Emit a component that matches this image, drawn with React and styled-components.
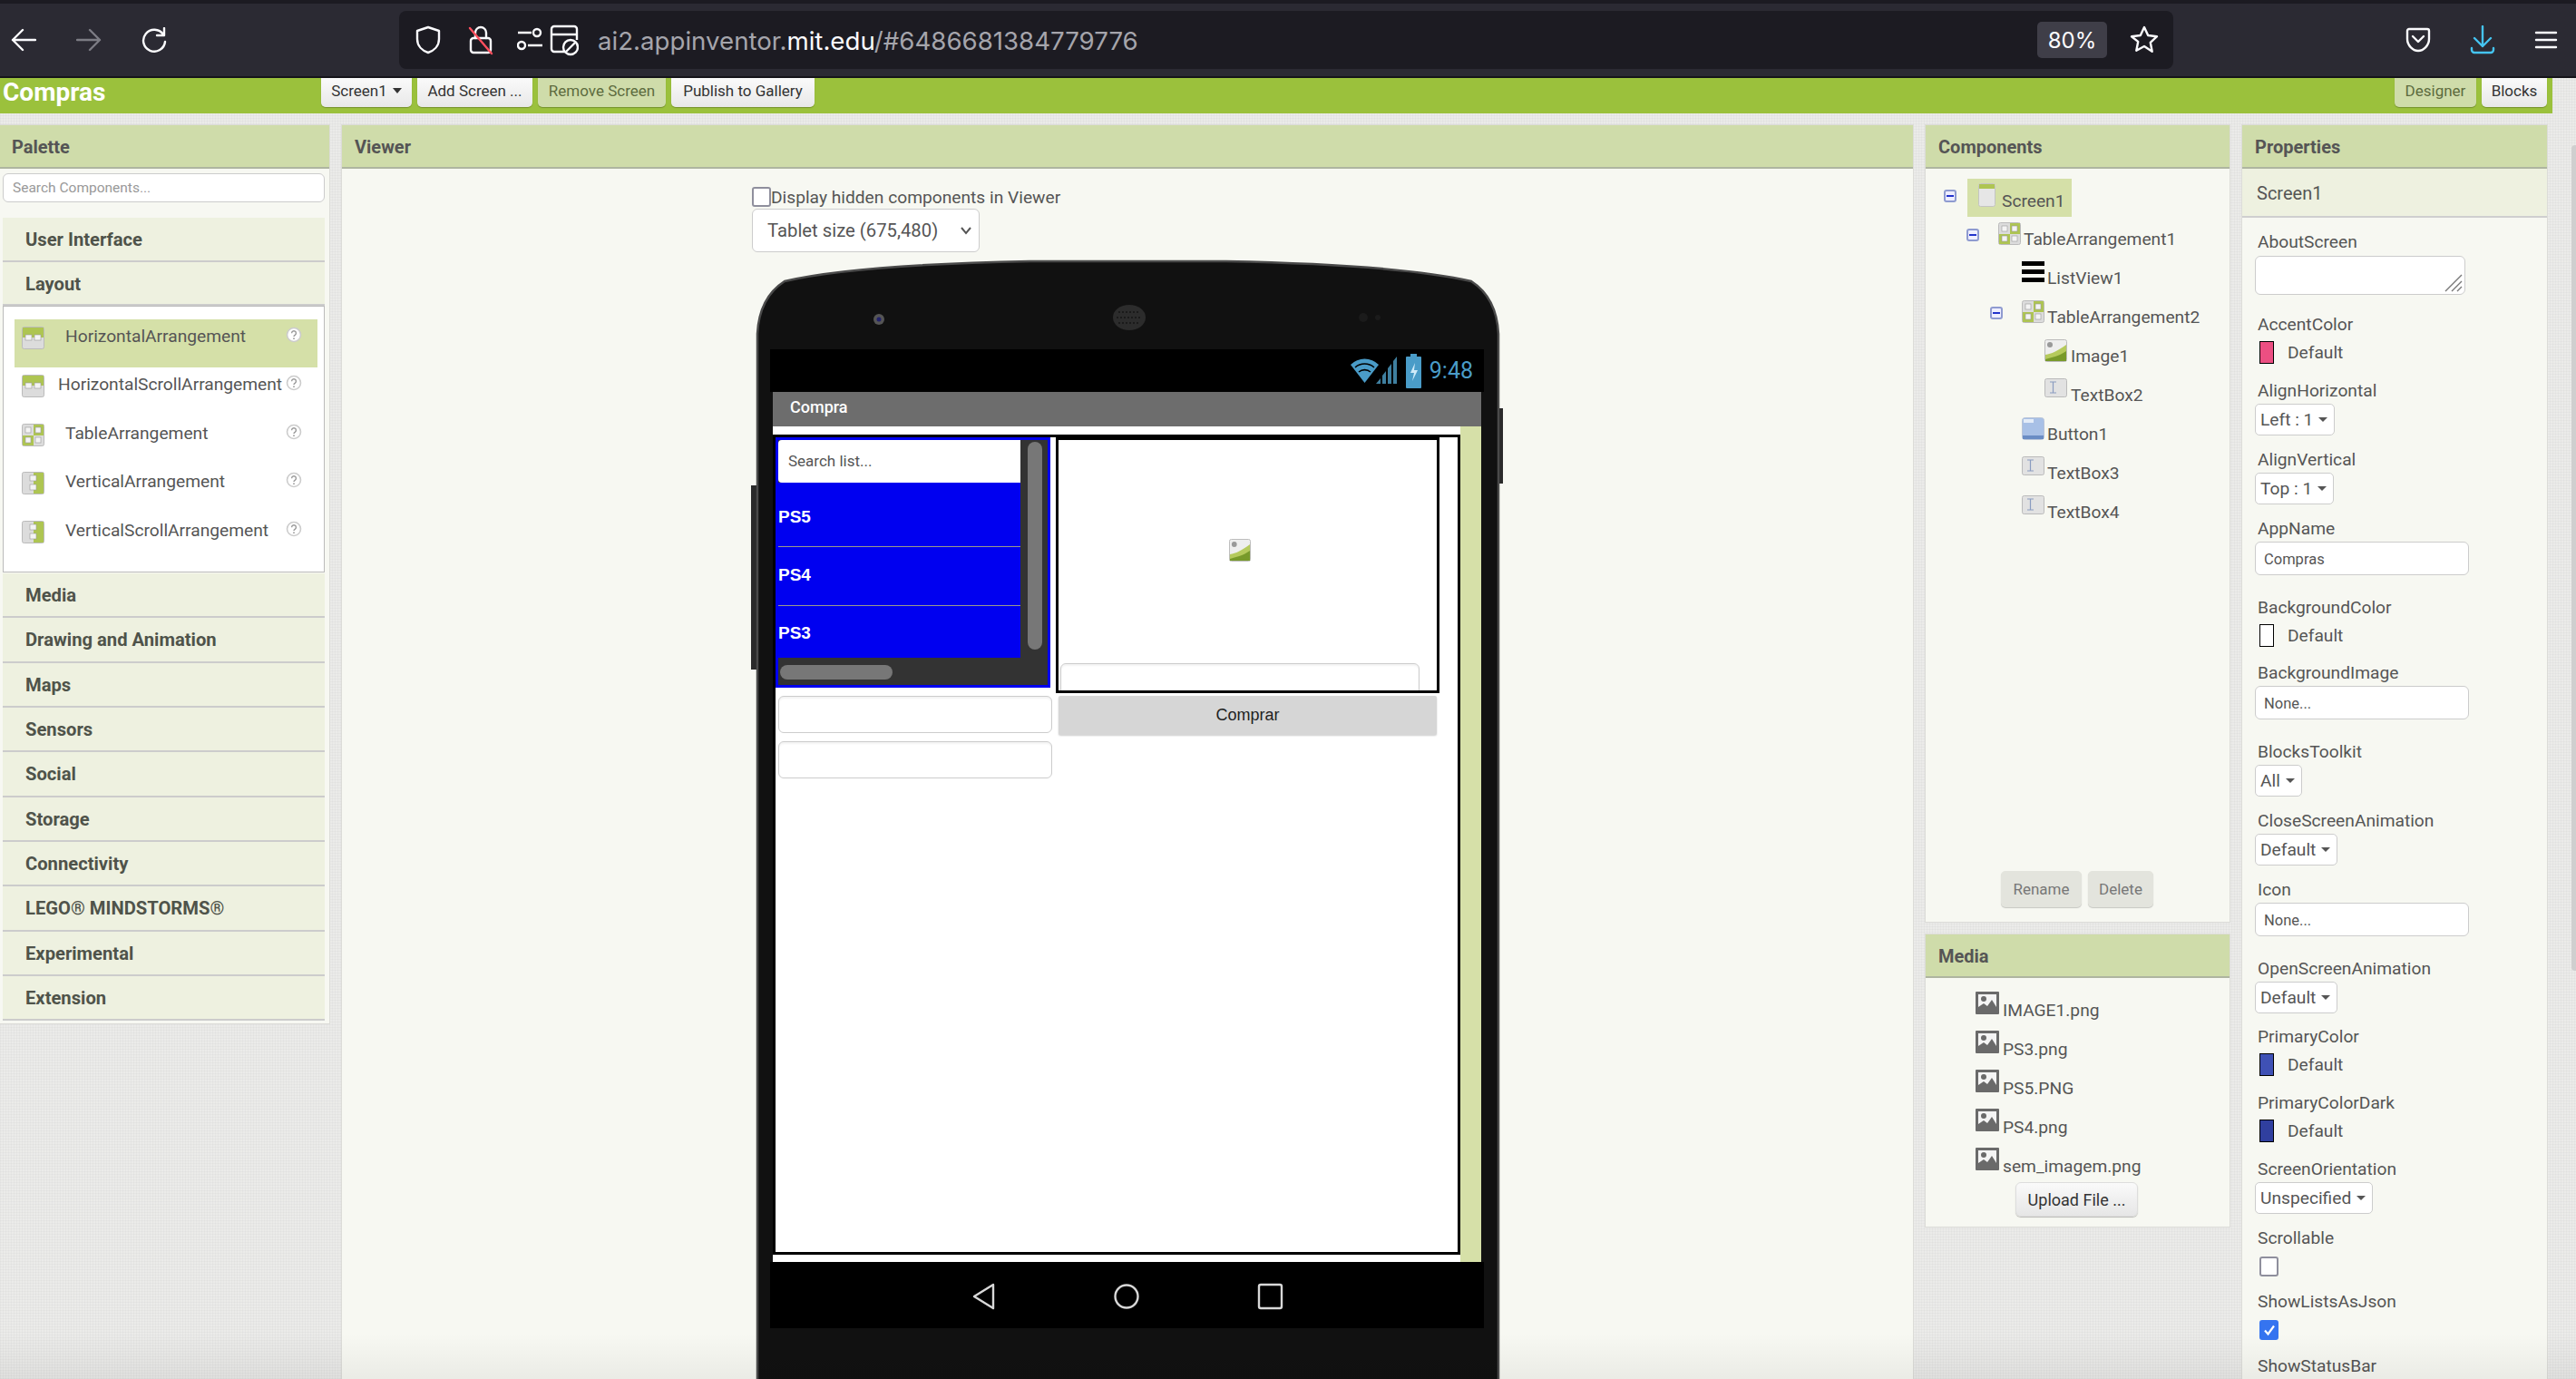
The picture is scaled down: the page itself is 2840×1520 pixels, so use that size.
import styled, { createGlobalStyle, css } from "styled-components";

const GlobalStyle = createGlobalStyle`
  html, body { margin: 0; padding: 0; }
  body {
    width: 2840px;
    height: 1520px;
    overflow: hidden;
    font-family: Roboto, "Liberation Sans", sans-serif;
    color: #555;
  }
  * { box-sizing: border-box; }
`;

const Page = styled.div`
  position: relative;
  width: 2840px;
  height: 1520px;
  overflow: hidden;
  background-color: #ebebe9;
  background-image:
    repeating-linear-gradient(0deg, rgba(0,0,0,.025) 0 1px, transparent 1px 3px),
    repeating-linear-gradient(90deg, rgba(0,0,0,.025) 0 1px, transparent 1px 3px);
`;

const BrowserBar = styled.div`
  height: 86px;
  background: #2b2a33;
  border-top: 4px solid #1c1b22;
  border-bottom: 2px solid #15141a;
  display: flex;
  align-items: center;
  position: relative;
`;

const NavButtons = styled.div`
  width: 440px;
  display: flex;
  align-items: center;
  padding-left: 12px;
  gap: 44px;
`;

const UrlBar = styled.div`
  width: 1956px;
  height: 64px;
  background: #1c1b22;
  border-radius: 8px;
  display: flex;
  align-items: center;
  padding-left: 18px;
`;

const UrlIcons = styled.div`
  display: flex;
  align-items: center;
  gap: 30px;
  margin-right: 21px;
`;

const UrlText = styled.div`
  flex: 1;
  padding-top: 2px;
  font: 400 27.65px Inter, "Liberation Sans", sans-serif;
  color: #a5a5ac;
  white-space: nowrap;
  b { font-weight: 400; color: #fbfbfe; }
`;

const ZoomBadge = styled.div`
  width: 77px;
  height: 40px;
  background: #3f3e48;
  border-radius: 5px;
  color: #fbfbfe;
  font: 400 24px Inter, "Liberation Sans", sans-serif;
  display: flex;
  align-items: center;
  justify-content: center;
  margin-right: 25px;
`;

const BrowserRight = styled.div`
  flex: 1;
  display: flex;
  align-items: center;
  padding-left: 256px;
  gap: 43px;
`;

const ProjectBar = styled.div`
  width: 2814px;
  height: 39px;
  background: #9bc13c;
  display: flex;
  align-items: flex-start;
`;

const ProjectName = styled.div`
  width: 354px;
  padding-left: 3px;
  font-size: 28px;
  font-weight: 700;
  line-height: 32px;
  color: #fff;
`;

const ToolButtons = styled.div`
  display: flex;
  gap: 6px;
`;

const ToolButton = styled.div`
  height: 32px;
  width: ${(p) => p.$w}px;
  padding-bottom: 5px;
  display: flex;
  align-items: center;
  justify-content: center;
  gap: 6px;
  font-size: 17px;
  white-space: nowrap;
  color: ${(p) => (p.$active ? "#5d6b3e" : "#333")};
  background: ${(p) => (p.$active ? "#cfdcaa" : "linear-gradient(#fafafa, #e8e8e8)")};
  border-radius: 0 0 5px 5px;
  box-shadow: 0 1px 1px rgba(0,0,0,.25);
`;

const Spacer = styled.div`
  flex: 1;
`;

const RightButtons = styled(ToolButtons)`
  margin-right: 6px;
`;

const Workspace = styled.div`
  display: grid;
  grid-template-columns: 363px 1732px 335px 336px;
  gap: 14px;
  margin-top: 13px;
  height: 1382px;
  align-items: start;
`;

const Panel = styled.section`
  background: #f7f8f2;
  box-shadow: 0 0 0 1px #dcdcd8;
  ${(p) => p.$h && css`height: ${p.$h}px;`}
`;

const PanelHeader = styled.div`
  height: 48px;
  padding-left: ${(p) => p.$pad || 13}px;
  background: #cfdcaa;
  border-bottom: 2px solid #aeb5a0;
  font-size: 20px;
  font-weight: 700;
  line-height: 49px;
  color: #555;
`;

const SearchBox = styled.div`
  margin: 5px 5px 0 3px;
  height: 32px;
  background: #fff;
  border: 1px solid #ccc;
  border-radius: 6px;
  font-size: 15.5px;
  line-height: 30px;
  padding-left: 10px;
  color: #999;
`;

const Categories = styled.div`
  padding: 17px 5px 3px 3px;
`;

const Category = styled.div`
  height: ${(p) => p.$h || 49.33}px;
  background: #eef1e0;
  border-bottom: 2px solid #ccc;
  padding-left: 25px;
  font-size: 20.2px;
  font-weight: 700;
  line-height: 49px;
  color: #4f534a;
`;

const PaletteList = styled.div`
  height: 294px;
  background: #fff;
  border: 1px solid #bbb;
  padding: 14px 7px 0 12px;
  margin-bottom: 1px;
`;

const PaletteItem = styled.div`
  height: 53.4px;
  display: flex;
  align-items: flex-start;
  padding: 8px 0 0 8px;
  font-size: 19.2px;
  line-height: 22px;
  color: #555;
  background: ${(p) => (p.$selected ? "#d5e0a8" : "transparent")};
  span { margin-left: ${(p) => p.$gap}px; flex: 1; white-space: nowrap; }
`;

const ViewerBody = styled.div`
  height: 1334px;
  padding: 18px 0 0 452px;
  overflow: hidden;
`;

const HiddenRow = styled.div`
  display: flex;
  align-items: center;
  height: 26px;
  font-size: 19.2px;
  color: #555;
`;

const CheckBox = styled.div`
  width: ${(p) => p.$s || 21}px;
  height: ${(p) => p.$s || 22}px;
  border: 2px solid ${(p) => (p.$checked ? "#3574f0" : "#8f8f9d")};
  background: ${(p) => (p.$checked ? "#3574f0" : "#fff")};
  border-radius: 3px;
  display: flex;
  align-items: center;
  justify-content: center;
`;

const PhoneSizeSelect = styled.div`
  width: 251px;
  height: 48px;
  background: #fff;
  border: 1px solid #ccc;
  border-radius: 6px;
  display: flex;
  align-items: center;
  justify-content: space-between;
  padding: 0 7px 0 16px;
  font-size: 20.3px;
  color: #555;
`;

const Phone = styled.div`
  position: relative;
  width: 817px;
  height: 1240px;
  margin: 10px 0 0 6px;
  padding: 97px 16px 0 14px;
`;

const PhoneShell = styled.svg`
  position: absolute;
  left: 0;
  top: 0;
  overflow: visible;
`;

const StatusBar = styled.div`
  position: relative;
  height: 47px;
  background: #000;
  display: flex;
  align-items: center;
  justify-content: flex-end;
  padding-right: 12px;
  gap: 9px;
  color: #4a9cc8;
  font-size: 25px;
`;

const Screen = styled.div`
  position: relative;
  margin: 0 3px;
`;

const TitleBar = styled.div`
  height: 38px;
  background: #6d6d6d;
  color: #fff;
  font-size: 18px;
  font-weight: 500;
  line-height: 34px;
  padding-left: 19px;
`;

const ScreenRow = styled.div`
  display: flex;
  height: 921px;
`;

const FormArea = styled.div`
  width: 758px;
  padding-top: 9px;
  background: #fff;
`;

const GreenStrip = styled.div`
  flex: 1;
  background: #d6e0a8;
`;

const FormBox = styled.div`
  height: 904px;
  border: 3px solid #000;
  display: grid;
  grid-template-columns: 309px 423px;
  grid-template-rows: 282px auto 1fr;
  align-content: start;
`;

const ListBox = styled.div`
  position: relative;
  width: 303px;
  height: 276px;
  border: 3px solid #0000f0;
  background: #333;
`;

const ListSearch = styled.div`
  width: 267px;
  height: 47px;
  background: #fff;
  border-radius: 4px 0 0 4px;
  padding-left: 11px;
  font-size: 17px;
  line-height: 46px;
  color: #555;
`;

const ListRows = styled.div`
  width: 267px;
  height: 193px;
  background: #0000f0;
  overflow: hidden;
`;

const ListRow = styled.div`
  height: ${(p) => p.$h}px;
  padding-top: ${(p) => p.$top}px;
  border-bottom: 1px solid #9a9a8a;
  color: #fff;
  font: 700 19px "Liberation Sans", sans-serif;
  line-height: 24px;
`;

const ThumbV = styled.div`
  position: absolute;
  left: 275px;
  top: 2px;
  width: 16px;
  height: 229px;
  border-radius: 8px;
  background: #777;
`;

const ThumbH = styled.div`
  position: absolute;
  left: 2px;
  top: 248px;
  width: 124px;
  height: 16px;
  border-radius: 8px;
  background: #777;
`;

const ImageTable = styled.div`
  width: 423px;
  height: 282px;
  border: 3px solid #000;
  padding-left: 2px;
  overflow: hidden;
`;

const ImageCell = styled.div`
  width: 396px;
  height: 246px;
  display: flex;
  align-items: center;
  justify-content: center;
  padding-bottom: 4px;
`;

const FormTextBox = styled.div`
  width: ${(p) => p.$w}px;
  height: ${(p) => p.$h || 41}px;
  margin: ${(p) => p.$m || "0"};
  background: #fff;
  border: 1px solid #ccc;
  border-radius: 6px;
  box-shadow: inset 0 2px 2px rgba(0,0,0,.05);
`;

const FormButton = styled.div`
  width: 417px;
  height: 43px;
  margin: 3px 0 0 3px;
  background: #d6d6d6;
  box-shadow: 0 1px 2px rgba(0,0,0,.2);
  border-radius: 2px;
  display: flex;
  align-items: center;
  justify-content: center;
  font: 400 18px "Liberation Sans", sans-serif;
  color: #222;
`;

const NavBar = styled.div`
  position: relative;
  height: 73px;
  background: #000;
`;

const TreeBody = styled.div`
  padding: 11px 0 0 20px;
  height: 771px;
  position: relative;
`;

const TreeRow = styled.div`
  display: flex;
  align-items: flex-start;
  height: 43px;
  padding-left: ${(p) => p.$indent}px;
  font-size: 19.2px;
  color: #555;
`;

const Toggle = styled.span`
  width: 14px;
  height: 14px;
  margin: 12px 11px 0 0;
  flex: none;
  border: 2px solid #8f9bd0;
  border-radius: 3px;
  display: flex;
  align-items: center;
  justify-content: center;
  background: #eef;
  &::before {
    content: "";
    width: 8px;
    height: 2px;
    background: #2233cc;
  }
`;

const TreeLabel = styled.div`
  display: flex;
  align-items: flex-start;
  gap: ${(p) => p.$gap || 3}px;
  padding: ${(p) => (p.$selected ? "5px 7px 0 12px" : "5px 0 0 0")};
  height: ${(p) => (p.$selected ? "42px" : "auto")};
  background: ${(p) => (p.$selected ? "#d5e0a8" : "transparent")};
  margin-left: ${(p) => p.$lead || 0}px;
  span { margin-top: ${(p) => (p.$selected ? 8 : 7)}px; line-height: 24px; }
`;

const TreeActions = styled.div`
  position: absolute;
  left: 83px;
  top: 774px;
  display: flex;
  gap: 7px;
`;

const GreyButton = styled.div`
  width: ${(p) => p.$w}px;
  height: 40px;
  background: #e3e4dd;
  border-radius: 5px;
  box-shadow: 0 1px 1px rgba(0,0,0,.2);
  display: flex;
  align-items: center;
  justify-content: center;
  font-size: 17px;
  color: #777;
`;

const SideColumn = styled.div`
  display: flex;
  flex-direction: column;
  gap: 14px;
`;

const MediaBody = styled.div`
  padding: 15px 0 0 55px;
  height: 274px;
`;

const MediaRow = styled.div`
  display: flex;
  align-items: flex-start;
  gap: 4px;
  height: 43px;
  font-size: 19.2px;
  color: #555;
  span { margin-top: 9px; line-height: 24px; }
`;

const UploadButton = styled.div`
  width: 135px;
  height: 38px;
  margin: -5px 0 0 44px;
  background: linear-gradient(#fafafa, #e6e6e6);
  border-radius: 6px;
  border: 1px solid #ddd;
  box-shadow: 0 1px 1px rgba(0,0,0,.25);
  display: flex;
  align-items: center;
  justify-content: center;
  font-size: 18px;
  color: #333;
`;

const SelectedName = styled.div`
  height: 54px;
  background: #eef1e0;
  border-bottom: 2px solid #cfcfcf;
  padding-left: 16px;
  font-size: 20px;
  line-height: 54px;
  color: #555;
`;

const PropList = styled.div`
  height: 1286px;
  padding: 15px 0 0 14px;
  overflow: hidden;
`;

const PropRow = styled.div`
  height: ${(p) => p.$h}px;
  font-size: 19.2px;
  line-height: 24px;
  color: #555;
`;

const PropLabel = styled.div`
  padding-left: 3px;
  margin-bottom: ${(p) => p.$gap}px;
`;

const TextInput = styled.div`
  width: ${(p) => p.$w || 236}px;
  height: ${(p) => p.$h || 37}px;
  position: relative;
  background: #fff;
  border: 1px solid #ccc;
  border-radius: 6px;
  padding-left: 9px;
  font-size: 16.5px;
  line-height: 37px;
  color: #555;
`;

const GripIcon = styled.svg`
  position: absolute;
  right: 2px;
  bottom: 2px;
`;

const Dropdown = styled.div`
  display: inline-flex;
  align-items: center;
  gap: 6px;
  height: 35px;
  padding: 0 7px 0 5px;
  background: #fff;
  border: 1px solid #ccc;
  border-radius: 5px;
  font-size: 19.2px;
  color: #555;
  &::after {
    content: "";
    border-left: 5px solid transparent;
    border-right: 5px solid transparent;
    border-top: 5px solid #555;
  }
`;

const Caret = styled.span`
  width: 0;
  height: 0;
  border-left: 5px solid transparent;
  border-right: 5px solid transparent;
  border-top: 6px solid #333;
`;

const SwatchRow = styled.div`
  display: flex;
  align-items: center;
  padding-left: 5px;
  gap: 15px;
`;

const Swatch = styled.span`
  width: 16px;
  height: 25px;
  background: ${(p) => p.$color};
  border: 1px solid #000;
`;

const CheckWrap = styled.div`
  padding-left: 5px;
`;

const PageScrollbar = styled.div`
  position: absolute;
  left: 2835px;
  top: 160px;
  width: 5px;
  height: 910px;
  border-radius: 4px 0 0 4px;
  background: #cfcfcf;
`;

const BottomFade = styled.div`
  position: absolute;
  left: 0;
  right: 0;
  bottom: 0;
  height: 50px;
  background: linear-gradient(rgba(0,0,0,0), rgba(0,0,0,.05));
  pointer-events: none;
`;

function ArrangeIcon({ kind = "t", size = 25 }) {
  return (
    <svg width={size} height={size} viewBox="0 0 25 25" style={{ flex: "none" }}>
      <rect x="0.5" y="0.5" width="24" height="24" rx="2" fill="#dcdcdc" stroke="#bbb" />
      {kind === "h" && <rect x="1" y="1" width="23" height="11" fill="#aec552" />}
      {kind === "v" && <rect x="13" y="1" width="11" height="23" fill="#aec552" />}
      {kind === "t" && (
        <>
          <rect x="13" y="1" width="11" height="12" fill="#aec552" />
          <rect x="1" y="13" width="12" height="11" fill="#aec552" />
        </>
      )}
      {kind === "h" && (
        <>
          <rect x="4" y="9" width="7" height="6" fill="#f4f4f4" stroke="#999" strokeWidth=".6" />
          <rect x="14" y="9" width="7" height="6" fill="#f4f4f4" stroke="#999" strokeWidth=".6" />
        </>
      )}
      {kind === "v" && (
        <>
          <rect x="9" y="4" width="7" height="6" fill="#f4f4f4" stroke="#999" strokeWidth=".6" />
          <rect x="9" y="14" width="7" height="6" fill="#f4f4f4" stroke="#999" strokeWidth=".6" />
        </>
      )}
      {kind === "t" && (
        <>
          <rect x="4" y="4" width="6" height="6" fill="#f4f4f4" stroke="#999" strokeWidth=".6" />
          <rect x="15" y="4" width="6" height="6" fill="#f4f4f4" stroke="#999" strokeWidth=".6" />
          <rect x="4" y="15" width="6" height="6" fill="#f4f4f4" stroke="#999" strokeWidth=".6" />
          <rect x="15" y="15" width="6" height="6" fill="#f4f4f4" stroke="#999" strokeWidth=".6" />
        </>
      )}
    </svg>
  );
}

function HelpIcon() {
  return (
    <svg width="18" height="18" viewBox="0 0 18 18" style={{ flex: "none", marginRight: 17 }}>
      <circle cx="9" cy="9" r="7.5" fill="#fff" stroke="#ccc" strokeWidth="1.6" />
      <path d="M6.6 7.2a2.4 2.4 0 1 1 3.6 2.1c-.8.5-1.2.9-1.2 1.8" fill="none" stroke="#999" strokeWidth="1.4" />
      <circle cx="9" cy="13.2" r=".9" fill="#999" />
    </svg>
  );
}

function ScreenIcon() {
  return (
    <svg width="19" height="26" viewBox="0 0 19 26" style={{ flex: "none" }}>
      <rect x=".5" y=".5" width="18" height="25" rx="2" fill="#e6e6e6" stroke="#c4c4c4" />
      <rect x="1" y="1" width="17" height="5" fill="#aec552" />
    </svg>
  );
}

function ListIcon() {
  return (
    <svg width="25" height="23" viewBox="0 0 25 23" style={{ flex: "none" }}>
      <rect width="25" height="5" fill="#000" />
      <rect y="9" width="25" height="5" fill="#000" />
      <rect y="18" width="25" height="5" fill="#000" />
    </svg>
  );
}

function PictureIcon({ w = 25, h = 25 }) {
  return (
    <svg width={w} height={h} viewBox="0 0 25 25" preserveAspectRatio="none" style={{ flex: "none" }}>
      <rect x=".5" y=".5" width="24" height="24" rx="2" fill="#eee" stroke="#bbb" />
      <circle cx="6" cy="6" r="3" fill="#999" />
      <path d="M1 17C8 16 14 13 24 6V24H1Z" fill="#b5ca5c" />
      <path d="M1 22C8 20 15 19 24 13V24H1Z" fill="#789a2a" />
    </svg>
  );
}

function TextBoxIcon() {
  return (
    <svg width="25" height="21" viewBox="0 0 25 21" style={{ flex: "none" }}>
      <rect x=".5" y=".5" width="24" height="20" rx="2" fill="#e2e2e2" stroke="#bbb" />
      <path d="M6 4h7M6 16h7M9.5 4v12" fill="none" stroke="#8a9cc0" strokeWidth="1.2" />
    </svg>
  );
}

function ButtonIcon() {
  return (
    <svg width="25" height="25" viewBox="0 0 25 25" style={{ flex: "none" }}>
      <rect x=".5" y=".5" width="24" height="24" rx="3" fill="#a8c0e6" stroke="#b8c4d8" />
      <rect x="2" y="2" width="11" height="4" fill="#e4ecf8" />
      <rect x="1" y="20" width="23" height="4" fill="#6a8cc4" />
    </svg>
  );
}

function MediaIcon() {
  return (
    <svg width="26" height="25" viewBox="0 0 26 25" style={{ flex: "none" }}>
      <rect width="26" height="25" rx="1" fill="#6a6a6a" />
      <rect x="3" y="3" width="20" height="19" fill="#f4f4f4" />
      <circle cx="9" cy="8" r="3" fill="#6a6a6a" />
      <path d="M3 22V17l6-4 4 3 5-7 5 8v5Z" fill="#6a6a6a" />
    </svg>
  );
}

function Chevron() {
  return (
    <svg width="14" height="10" viewBox="0 0 14 10">
      <path d="M2 2l5 6 5-6" fill="none" stroke="#555" strokeWidth="2" />
    </svg>
  );
}

function BrowserIcon({ children, w = 28, h = 28, color = "#fbfbfe" }) {
  return (
    <svg width={w} height={h} viewBox={`0 0 ${w} ${h}`} fill="none" stroke={color} strokeWidth="2.4" strokeLinecap="round" strokeLinejoin="round" style={{ flex: "none" }}>
      {children}
    </svg>
  );
}

function BottomButtons() {
  return (
    <svg width="787" height="73" viewBox="0 0 787 73" fill="none" stroke="#d8d8d8" strokeWidth="2.4">
      <path d="M246 25L225 38L246 51Z" strokeLinejoin="round" />
      <ellipse cx="393" cy="38" rx="12.5" ry="12.5" />
      <rect x="539" y="25" width="25" height="26" rx="2" />
    </svg>
  );
}

const paletteItems = [
  { name: "HorizontalArrangement", kind: "h", gap: 23, selected: true },
  { name: "HorizontalScrollArrangement", kind: "h", gap: 15 },
  { name: "TableArrangement", kind: "t", gap: 23 },
  { name: "VerticalArrangement", kind: "v", gap: 23 },
  { name: "VerticalScrollArrangement", kind: "v", gap: 23 },
];

const laterCategories = ["Media", "Drawing and Animation", "Maps", "Sensors", "Social", "Storage", "Connectivity", "LEGO® MINDSTORMS®", "Experimental", "Extension"];

const mediaFiles = ["IMAGE1.png", "PS3.png", "PS5.PNG", "PS4.png", "sem_imagem.png"];

const props = [
  { name: "AboutScreen", h: 91, type: "area" },
  { name: "AccentColor", h: 73, type: "color", color: "#ec4f82" },
  { name: "AlignHorizontal", h: 76, type: "select", value: "Left : 1" },
  { name: "AlignVertical", h: 76, type: "select", value: "Top : 1" },
  { name: "AppName", h: 87, type: "input", value: "Compras" },
  { name: "BackgroundColor", h: 72, type: "color", color: "#fff" },
  { name: "BackgroundImage", h: 87, type: "input", value: "None..." },
  { name: "BlocksToolkit", h: 76, type: "select", value: "All" },
  { name: "CloseScreenAnimation", h: 76, type: "select", value: "Default" },
  { name: "Icon", h: 87, type: "input", value: "None..." },
  { name: "OpenScreenAnimation", h: 75, type: "select", value: "Default" },
  { name: "PrimaryColor", h: 73, type: "color", color: "#3f51b5" },
  { name: "PrimaryColorDark", h: 73, type: "color", color: "#303f9f" },
  { name: "ScreenOrientation", h: 76, type: "select", value: "Unspecified" },
  { name: "Scrollable", h: 70, type: "check" },
  { name: "ShowListsAsJson", h: 71, type: "check", checked: true },
  { name: "ShowStatusBar", h: 76, type: "check", checked: true },
];

const labelGap = { area: 3, color: 6, select: 2, input: 2, check: 8 };

function PropControl({ item }) {
  if (item.type === "area") {
    return (
      <TextInput $w={232} $h={43}>
        <GripIcon width="20" height="20" viewBox="0 0 20 20" stroke="#777" strokeWidth="1.4">
          <path d="M1 19L19 1M8 19L19 8M14 19l5-5" />
        </GripIcon>
      </TextInput>
    );
  }
  if (item.type === "color") {
    return (
      <SwatchRow>
        <Swatch $color={item.color} />
        Default
      </SwatchRow>
    );
  }
  if (item.type === "select") return <Dropdown>{item.value}</Dropdown>;
  if (item.type === "input") return <TextInput>{item.value}</TextInput>;
  return (
    <CheckWrap>
      <CheckBox $checked={item.checked}>
        {item.checked && (
          <svg width="14" height="14" viewBox="0 0 14 14">
            <path d="M2 7.5l3.5 4L12 2.5" fill="none" stroke="#fff" strokeWidth="2.2" />
          </svg>
        )}
      </CheckBox>
    </CheckWrap>
  );
}

export default function App() {
  return (
    <Page>
      <GlobalStyle />
      <BrowserBar>
        <NavButtons>
          <BrowserIcon>
            <path d="M27 14H2M13 3L2 14l11 11" />
          </BrowserIcon>
          <BrowserIcon color="#7c7c84">
            <path d="M1 14h25M15 3l11 11-11 11" />
          </BrowserIcon>
          <BrowserIcon>
            <path d="M24 8A12 12 0 1 0 26 16M25 1v8h-8" />
          </BrowserIcon>
        </NavButtons>
        <UrlBar>
          <UrlIcons>
            <BrowserIcon w={28} h={32}>
              <path d="M14 2l12 4v9c0 8-6 13-12 15C8 28 2 23 2 15V6Z" />
            </BrowserIcon>
            <BrowserIcon w={28} h={34}>
              <rect x="3" y="15" width="22" height="16" rx="3" />
              <path d="M8 15V9a6 6 0 0 1 12 0v6" />
              <path d="M2 4l24 28" stroke="#ff4f5e" />
            </BrowserIcon>
            <svg width="68" height="36" viewBox="0 0 68 36" fill="none" stroke="#fbfbfe" strokeWidth="2.4" style={{ marginLeft: -4 }}>
              <path d="M1 10h15M12 24h16" />
              <circle cx="22" cy="10" r="4" />
              <circle cx="5" cy="24" r="4" />
              <path d="M38 28V6a3 3 0 0 1 3-3h22a3 3 0 0 1 3 3v12M38 12h28M38 28a3 3 0 0 0 3 3h11" />
              <circle cx="59" cy="26" r="8" />
              <path d="M54 31l10-10" />
            </svg>
          </UrlIcons>
          <UrlText>
            ai2.appinventor.<b>mit.edu</b>/#6486681384779776
          </UrlText>
          <ZoomBadge>80%</ZoomBadge>
          <BrowserIcon w={32} h={32}>
            <path d="M16 2l4.2 9 9.8 1.2-7.2 6.7 1.9 9.8L16 23l-8.7 4.7 1.9-9.8L2 12.2 11.8 11Z" />
          </BrowserIcon>
          <Spacer style={{ maxWidth: 16 }} />
        </UrlBar>
        <BrowserRight>
          <BrowserIcon w={28} h={30}>
            <path d="M4 3h20a2 2 0 0 1 2 2v9c0 7-6 13-12 13S2 21 2 14V5a2 2 0 0 1 2-2Z" />
            <path d="M8 11l6 6 6-6" />
          </BrowserIcon>
          <BrowserIcon w={28} h={32} color="#45c4f0">
            <path d="M14 1v22M5 14l9 9 9-9M2 25v2a3 3 0 0 0 3 3h18a3 3 0 0 0 3-3v-2" />
          </BrowserIcon>
          <BrowserIcon w={26} h={24}>
            <path d="M2 4h22M2 12h22M2 20h22" />
          </BrowserIcon>
        </BrowserRight>
      </BrowserBar>

      <ProjectBar>
        <ProjectName>Compras</ProjectName>
        <ToolButtons>
          <ToolButton $w={100}>
            Screen1
            <Caret />
          </ToolButton>
          <ToolButton $w={127}>Add Screen ...</ToolButton>
          <ToolButton $w={141} $active>Remove Screen</ToolButton>
          <ToolButton $w={158}>Publish to Gallery</ToolButton>
        </ToolButtons>
        <Spacer />
        <RightButtons>
          <ToolButton $w={90} $active>Designer</ToolButton>
          <ToolButton $w={72}>Blocks</ToolButton>
        </RightButtons>
      </ProjectBar>

      <Workspace>
        <Panel>
          <PanelHeader>Palette</PanelHeader>
          <SearchBox>Search Components...</SearchBox>
          <Categories>
            <Category $h={49}>User Interface</Category>
            <Category $h={48}>Layout</Category>
            <PaletteList>
              {paletteItems.map((item) => (
                <PaletteItem key={item.name} $selected={item.selected} $gap={item.gap}>
                  <ArrangeIcon kind={item.kind} />
                  <span>{item.name}</span>
                  <HelpIcon />
                </PaletteItem>
              ))}
            </PaletteList>
            {laterCategories.map((name) => (
              <Category key={name}>{name}</Category>
            ))}
          </Categories>
        </Panel>

        <Panel>
          <PanelHeader $pad={14}>Viewer</PanelHeader>
          <ViewerBody>
            <HiddenRow>
              <CheckBox />
              Display hidden components in Viewer
            </HiddenRow>
            <PhoneSizeSelect>
              Tablet size (675,480)
              <Chevron />
            </PhoneSizeSelect>
            <Phone>
              <PhoneShell width="817" height="1240" viewBox="0 0 817 1240">
                <rect x="-7" y="247" width="8" height="203" fill="#2a2a2a" />
                <rect x="816" y="162" width="6" height="83" fill="#2a2a2a" />
                <path d="M0 1240V80Q2 40 30 22C90 8 200 2 300 0H517C617 2 727 8 787 22Q815 40 817 80V1240Z" fill="#111" stroke="#4a4a4a" strokeWidth="2.5" />
                <circle cx="134" cy="64" r="6" fill="#555" />
                <circle cx="134" cy="64" r="2.5" fill="#22226a" />
                <ellipse cx="410" cy="62" rx="18" ry="14" fill="#2c2c2c" />
                <path d="M398 56h24M396 62h28M398 68h24" stroke="#151515" strokeWidth="1.5" strokeDasharray="2 2" />
                <circle cx="668" cy="62" r="5" fill="#1b1b1b" />
                <circle cx="684" cy="62" r="3" fill="#1b1b1b" />
              </PhoneShell>
              <StatusBar>
                <svg width="52" height="42" viewBox="0 0 52 42">
                  <path d="M0 14A22 22 0 0 1 31 14L15.5 34Z" fill="#4a9cc8" />
                  <path d="M5 17A16 16 0 0 1 26 17M9 22A10 10 0 0 1 22 22" fill="none" stroke="#000" strokeWidth="1.6" />
                  <path d="M28 35L33 29V35ZM35 35V26L39 21V35ZM41 35V18L45 13V35ZM47 35V10L51 5V35Z" fill="#3f7f9f" />
                </svg>
                <svg width="17" height="38" viewBox="0 0 17 38">
                  <rect x="5" y="0" width="7" height="4" fill="#4a9cc8" />
                  <rect x="0" y="3" width="17" height="35" rx="1" fill="#4a9cc8" />
                  <path d="M10 10l-5 11h4l-2 9 6-12h-4Z" fill="#cfeaf8" />
                </svg>
                <span>9:48</span>
              </StatusBar>
              <Screen>
                <TitleBar>Compra</TitleBar>
                <ScreenRow>
                  <FormArea>
                    <FormBox>
                      <ListBox>
                        <ListSearch>Search list...</ListSearch>
                        <ListRows>
                          <ListRow $h={71} $top={26}>PS5</ListRow>
                          <ListRow $h={65} $top={19}>PS4</ListRow>
                          <ListRow $h={65} $top={18}>PS3</ListRow>
                        </ListRows>
                        <ThumbV />
                        <ThumbH />
                      </ListBox>
                      <ImageTable>
                        <ImageCell>
                          <PictureIcon w={24} h={25} />
                        </ImageCell>
                        <FormTextBox $w={396} $h={40} />
                      </ImageTable>
                      <FormTextBox $w={302} $m="3px 0 0 3px" />
                      <FormButton>Comprar</FormButton>
                      <FormTextBox $w={302} $m="7px 0 0 3px" />
                    </FormBox>
                  </FormArea>
                  <GreenStrip />
                </ScreenRow>
              </Screen>
              <NavBar>
                <BottomButtons />
              </NavBar>
            </Phone>
          </ViewerBody>
        </Panel>

        <SideColumn>
          <Panel $h={878}>
            <PanelHeader $pad={14}>Components</PanelHeader>
            <TreeBody>
              <TreeRow $indent={0}>
                <Toggle />
                <TreeLabel $selected $lead={1} $gap={7}>
                  <ScreenIcon />
                  <span>Screen1</span>
                </TreeLabel>
              </TreeRow>
              <TreeRow $indent={25}>
                <Toggle />
                <TreeLabel $lead={10}>
                  <ArrangeIcon kind="t" />
                  <span>TableArrangement1</span>
                </TreeLabel>
              </TreeRow>
              <TreeRow $indent={86}>
                <TreeLabel>
                  <ListIcon />
                  <span>ListView1</span>
                </TreeLabel>
              </TreeRow>
              <TreeRow $indent={51}>
                <Toggle />
                <TreeLabel $lead={10}>
                  <ArrangeIcon kind="t" />
                  <span>TableArrangement2</span>
                </TreeLabel>
              </TreeRow>
              <TreeRow $indent={111}>
                <TreeLabel $gap={4}>
                  <PictureIcon />
                  <span>Image1</span>
                </TreeLabel>
              </TreeRow>
              <TreeRow $indent={111}>
                <TreeLabel $gap={4}>
                  <TextBoxIcon />
                  <span>TextBox2</span>
                </TreeLabel>
              </TreeRow>
              <TreeRow $indent={86}>
                <TreeLabel>
                  <ButtonIcon />
                  <span>Button1</span>
                </TreeLabel>
              </TreeRow>
              <TreeRow $indent={86}>
                <TreeLabel>
                  <TextBoxIcon />
                  <span>TextBox3</span>
                </TreeLabel>
              </TreeRow>
              <TreeRow $indent={86}>
                <TreeLabel>
                  <TextBoxIcon />
                  <span>TextBox4</span>
                </TreeLabel>
              </TreeRow>
              <TreeActions>
                <GreyButton $w={89}>Rename</GreyButton>
                <GreyButton $w={72}>Delete</GreyButton>
              </TreeActions>
            </TreeBody>
          </Panel>
          <Panel $h={322}>
            <PanelHeader $pad={14}>Media</PanelHeader>
            <MediaBody>
              {mediaFiles.map((file) => (
                <MediaRow key={file}>
                  <MediaIcon />
                  <span>{file}</span>
                </MediaRow>
              ))}
              <UploadButton>Upload File ...</UploadButton>
            </MediaBody>
          </Panel>
        </SideColumn>

        <Panel>
          <PanelHeader $pad={14}>Properties</PanelHeader>
          <SelectedName>Screen1</SelectedName>
          <PropList>
            {props.map((item) => (
              <PropRow key={item.name} $h={item.h}>
                <PropLabel $gap={labelGap[item.type]}>{item.name}</PropLabel>
                <PropControl item={item} />
              </PropRow>
            ))}
          </PropList>
        </Panel>
      </Workspace>
      <PageScrollbar />
      <BottomFade />
    </Page>
  );
}
